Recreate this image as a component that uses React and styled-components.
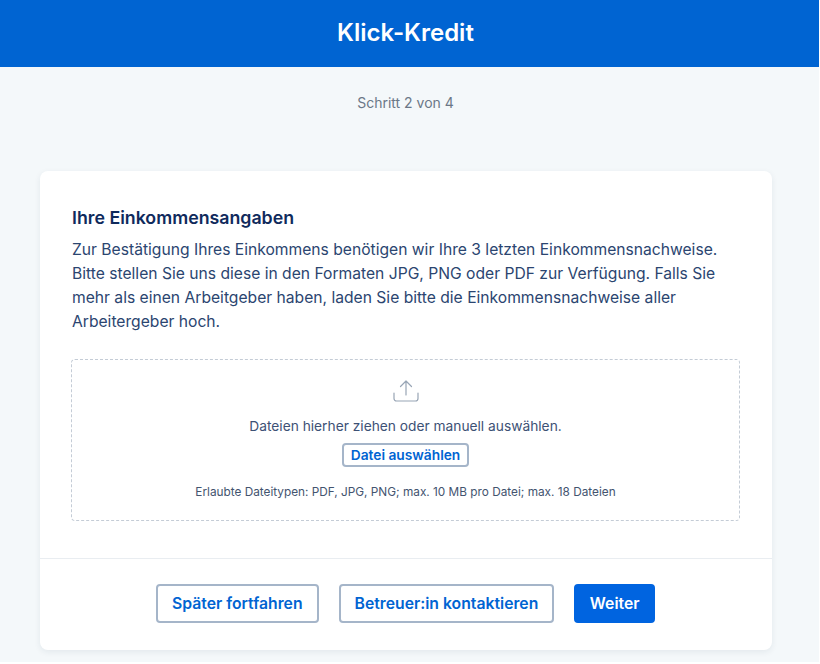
import React from "react"
import styled, { createGlobalStyle } from "styled-components"

const GlobalStyle = createGlobalStyle`
  html, body {
    margin: 0;
    padding: 0;
    background: #fff;
    font-family: Inter, "Liberation Sans", sans-serif;
  }
`

const Page = styled.div`
  width: 819px;
  height: 662px;
  overflow: hidden;
  background: #f4f8fa;
`

const Header = styled.header`
  height: 67px;
  padding: 0 8px 2px 0;
  background: #0064d2;
  display: flex;
  align-items: center;
  justify-content: center;
  box-sizing: border-box;
  color: #fff;
  font-size: 24px;
  font-weight: 600;
`

const Step = styled.div`
  margin-top: 27px;
  padding-right: 8px;
  text-align: center;
  font-size: 14px;
  line-height: 18px;
  color: #6b7787;
`

const Card = styled.section`
  margin: 59px 47px 0 40px;
  background: #fff;
  border-radius: 8px;
  box-shadow: 0 2px 6px rgba(30, 50, 80, 0.08);
`

const CardBody = styled.div`
  padding: 36px 32px 37px;
`

const Title = styled.h2`
  margin: 0 0 9px;
  font-size: 17.75px;
  line-height: 22px;
  font-weight: 600;
  color: #0f2a5c;
`

const Intro = styled.p`
  margin: 0 0 25px;
  font-size: 15.65px;
  line-height: 24px;
  color: #2b4570;
`

const DropZone = styled.div`
  height: 162px;
  margin-left: -1px;
  border: 1px dashed #c4ccd6;
  border-radius: 4px;
  display: flex;
  flex-direction: column;
  align-items: center;
  padding-top: 19px;
  box-sizing: border-box;
`

const UploadIcon = styled.svg`
  width: 26px;
  height: 23px;
  color: #98a5b5;
`

const DropText = styled.div`
  margin-top: 14px;
  font-size: 13.75px;
  line-height: 20px;
  color: #3d5175;
`

const PickButton = styled.button`
  margin-top: 7px;
  height: 24px;
  padding: 0 7px;
  background: #fff;
  border: 2px solid #a5b5c9;
  border-radius: 4px;
  font: 600 13.75px Inter, "Liberation Sans", sans-serif;
  color: #0064d2;
`

const Hint = styled.div`
  margin-top: 17px;
  font-size: 11.8px;
  line-height: 16px;
  color: #43546f;
`

const Footer = styled.div`
  border-top: 1px solid #e9edf1;
  height: 92px;
  box-sizing: border-box;
  padding: 25px 1px 0 0;
  display: flex;
  justify-content: center;
  gap: 20px;
`

const Button = styled.button`
  height: 39px;
  padding: 0 ${p => (p.$primary ? 13.5 : 14)}px;
  border-radius: 4px;
  border: 2px solid ${p => (p.$primary ? "#0064e0" : "#a5b5c9")};
  background: ${p => (p.$primary ? "#0064e0" : "#fff")};
  color: ${p => (p.$primary ? "#fff" : "#0064d2")};
  font: 600 15.75px Inter, "Liberation Sans", sans-serif;
`

export default function App() {
  return (
    <Page>
      <GlobalStyle />
      <Header>Klick-Kredit</Header>
      <Step>Schritt 2 von 4</Step>
      <Card>
        <CardBody>
          <Title>Ihre Einkommensangaben</Title>
          <Intro>
            Zur Bestätigung Ihres Einkommens benötigen wir Ihre 3 letzten Einkommensnachweise.
            Bitte stellen Sie uns diese in den Formaten JPG, PNG oder PDF zur Verfügung. Falls Sie
            mehr als einen Arbeitgeber haben, laden Sie bitte die Einkommensnachweise aller
            Arbeitergeber hoch.
          </Intro>
          <DropZone>
            <UploadIcon viewBox="0 0 26 23" fill="none" stroke="currentColor" strokeWidth="1.2" strokeLinecap="round" strokeLinejoin="round">
              <path d="M13 16V2M7.500 7.500 13 2l5.500 5.500" />
              <path d="M1 14v5.500A2.500 2.500 0 0 0 3.500 22h19a2.500 2.500 0 0 0 2.500-2.500V14" />
            </UploadIcon>
            <DropText>Dateien hierher ziehen oder manuell auswählen.</DropText>
            <PickButton>Datei auswählen</PickButton>
            <Hint>Erlaubte Dateitypen: PDF, JPG, PNG; max. 10 MB pro Datei; max. 18 Dateien</Hint>
          </DropZone>
        </CardBody>
        <Footer>
          <Button>Später fortfahren</Button>
          <Button>Betreuer:in kontaktieren</Button>
          <Button $primary>Weiter</Button>
        </Footer>
      </Card>
    </Page>
  )
}
